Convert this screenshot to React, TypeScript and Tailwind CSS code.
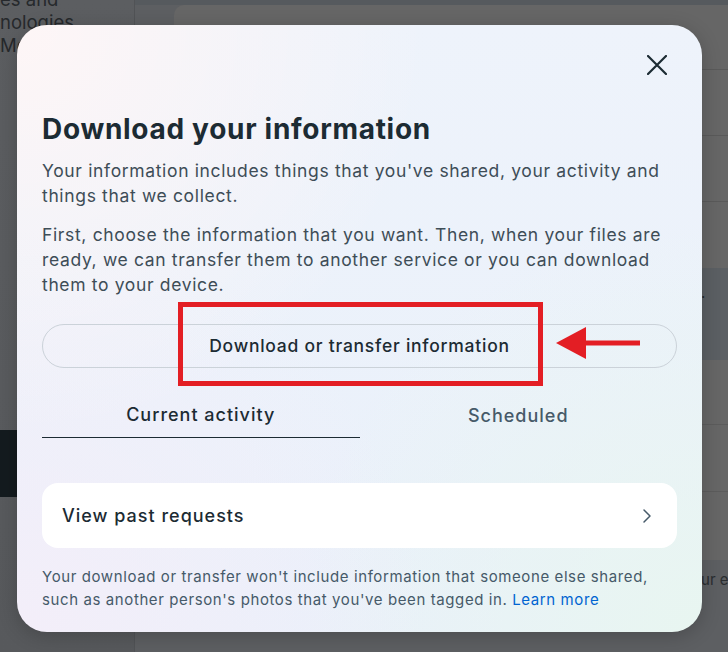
import React from "react";
import { ChevronRight } from "lucide-react";

const font = { fontFamily: "Inter, 'Liberation Sans', sans-serif" };

export default function App() {
  return (
    <div className="relative w-[728px] h-[652px] overflow-hidden bg-[#5c5e61] flex" style={font}>
      {/* Left column of the page behind */}
      <div className="w-[135px] shrink-0 border-r border-[#515356] flex flex-col bg-[linear-gradient(180deg,#5c5e61,#57595c)]">
        <div className="-mt-[12px] text-[18.5px] leading-[23px] text-[#26292c] whitespace-nowrap">
          <div>es and</div>
          <div>nologies</div>
          <div>Me</div>
        </div>
        <div className="mt-[373px] h-[67px] w-full bg-[#141b1f]" />
      </div>
      {/* Right area of the page behind */}
      <div className="flex-1 flex flex-col bg-[#5d5f62]">
        <div className="h-[5px] bg-[#565a5e]" />
        <div className="ml-[39px] h-[555px] rounded-tl-[10px] bg-[#666666] flex flex-col">
          <div className="h-[65px] border-b border-[#5a5a5a]" />
          <div className="h-[66px] border-b border-[#5a5a5a]" />
          <div className="h-[66px] border-b border-[#5a5a5a]" />
          <div className="h-[66px]" />
          <div className="h-[92px] bg-[#5b5f63] pl-[527px] pt-[14px] text-[15px] text-[#22282c]">.</div>
          <div className="h-[65px] border-b border-[#5c5c5c]" />
          <div className="h-[67px] border-b border-[#5c5c5c]" />
        </div>
        <div className="pl-[548px] pt-[9px] text-[15px] text-[#2a2d30] whitespace-nowrap">Your email</div>
      </div>

      {/* Modal */}
      <div className="absolute left-[17px] top-[25px] w-[685px] h-[607px] rounded-[30px] overflow-hidden bg-[radial-gradient(circle_at_0%_0%,rgba(255,246,246,0.95),rgba(255,246,246,0)_45%),radial-gradient(circle_at_0%_100%,rgba(244,238,249,0.95),rgba(244,238,249,0)_45%),radial-gradient(circle_at_100%_100%,rgba(232,246,240,0.95),rgba(232,246,240,0)_45%),linear-gradient(180deg,#eef3fb,#e9f0fa)] shadow-[0_4px_20px_rgba(0,0,0,0.2)] flex flex-col px-[25px] pt-[28px] pb-[20px]">
        <div className="flex justify-end h-[24px] items-center pr-[10px]">
          <svg width="20" height="20" viewBox="0 0 20 20" fill="none" stroke="#1c2b33" strokeWidth="2.2" strokeLinecap="round">
            <path d="M1 1 19 19M19 1 1 19" />
          </svg>
        </div>
        <h1 className="mt-[34px] text-[28px] leading-[36px] font-bold tracking-[0.7px] text-[#1c2b33]">Download your information</h1>
        <p className="mt-[11px] text-[17.5px] leading-[25px] tracking-[0.65px] text-[#3e4d57]">
          Your information includes things that you've shared, your activity and things that we collect.
        </p>
        <p className="mt-[14px] text-[17.5px] leading-[25px] tracking-[0.65px] text-[#3e4d57]">
          First, choose the information that you want. Then, when your files are ready, we can transfer them to another service or you can download them to your device.
        </p>
        <div className="mt-[27px] h-[44px] rounded-full border border-[#cbd2d9] flex items-center justify-center text-[17.5px] font-medium tracking-[0.75px] text-[#1c2b33]">
          Download or transfer information
        </div>
        <div className="mt-[24px] flex">
          <div className="flex-1 h-[46px] flex items-center justify-center border-b border-[#1c2b33] text-[18px] font-medium tracking-[1px] text-[#1c2b33]">
            Current activity
          </div>
          <div className="flex-1 h-[46px] flex items-center justify-center text-[18px] font-medium tracking-[1px] text-[#465a69]">
            Scheduled
          </div>
        </div>
        <div className="mt-[45px] h-[65px] rounded-[16px] bg-white flex items-center justify-between pl-[20px] pr-[18px]">
          <span className="text-[18px] font-medium tracking-[1px] text-[#1c2b33]">View past requests</span>
          <ChevronRight size={24} strokeWidth={1.5} color="#465a69" />
        </div>
        <p className="mt-[17px] text-[15px] leading-[23px] tracking-[0.6px] text-[#465a69]">
          Your download or transfer won't include information that someone else shared, such as another person's photos that you've been tagged in. <span className="text-[#0064d1]">Learn more</span>
        </p>

        {/* Annotation: red box */}
        <div className="absolute left-[161px] top-[277px] w-[365px] h-[84px] border-[5px] border-[#e31e24]" />
        {/* Annotation: arrow */}
        <svg className="absolute left-[539px] top-[302px]" width="84" height="32" viewBox="0 0 84 32">
          <polygon points="0,16 30,0 30,32" fill="#e31e24" />
          <rect x="28" y="13.5" width="56" height="5" fill="#e31e24" />
        </svg>
      </div>
    </div>
  );
}
